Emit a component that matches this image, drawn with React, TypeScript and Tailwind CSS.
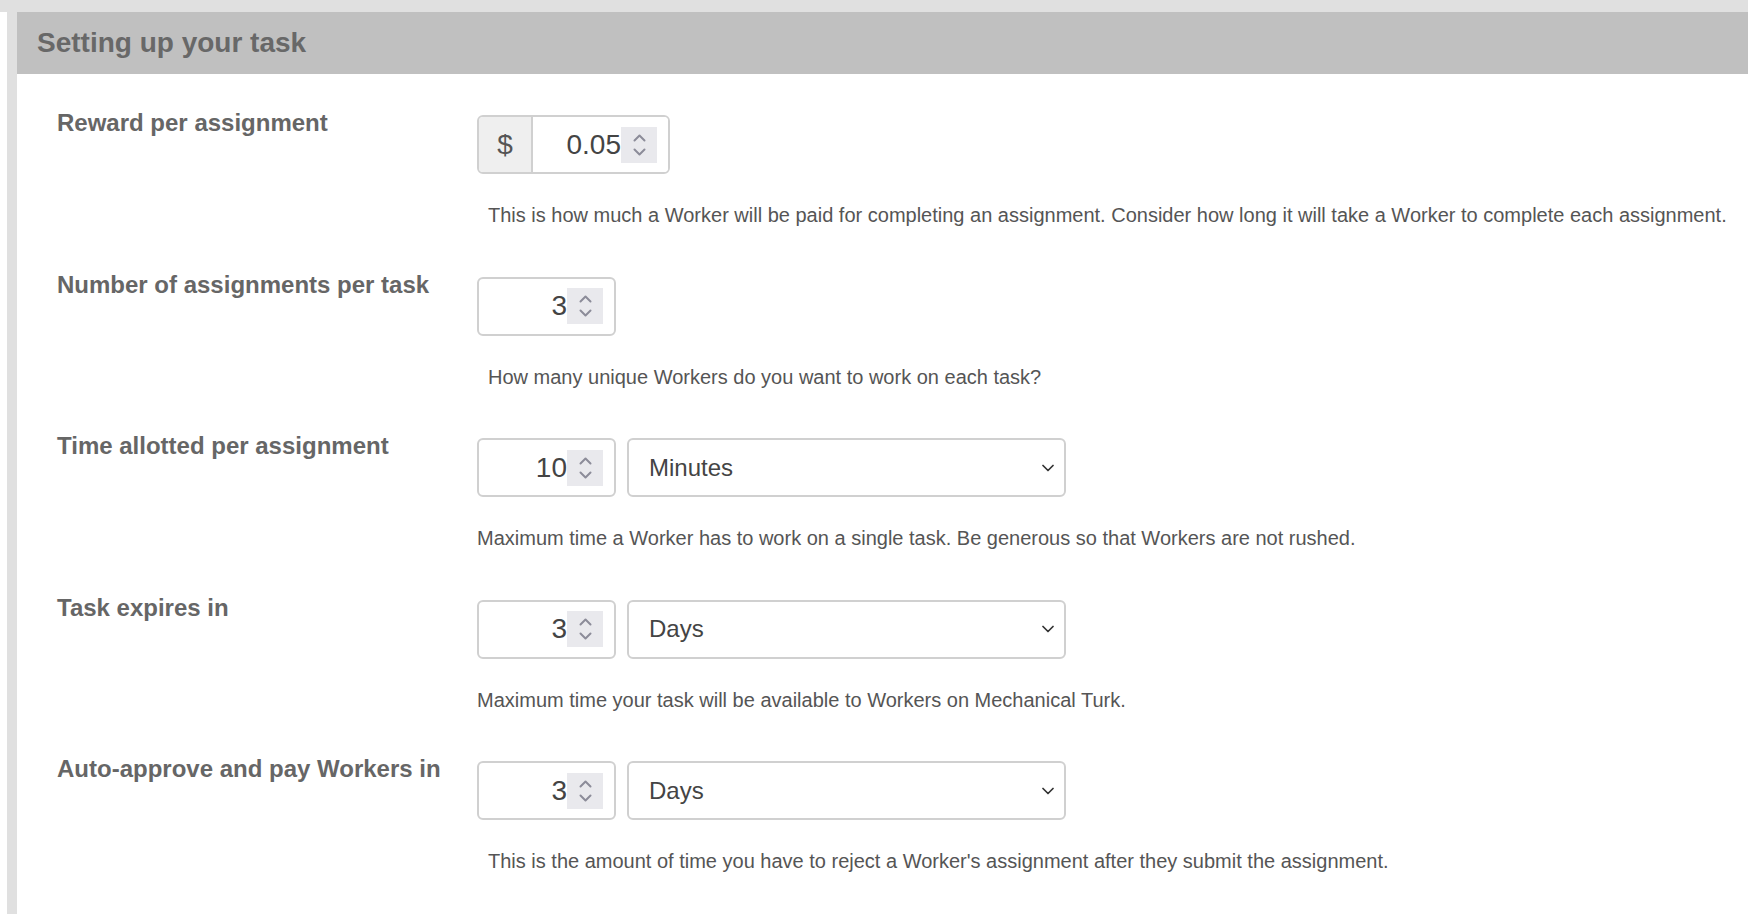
import React from 'react'

type Row = {
  label: string
  value: string
  money?: boolean
  unit?: string
  help: string
  indent: boolean
}

const rows: Row[] = [
  {
    label: 'Reward per assignment',
    value: '0.05',
    money: true,
    help: 'This is how much a Worker will be paid for completing an assignment. Consider how long it will take a Worker to complete each assignment.',
    indent: true,
  },
  {
    label: 'Number of assignments per task',
    value: '3',
    help: 'How many unique Workers do you want to work on each task?',
    indent: true,
  },
  {
    label: 'Time allotted per assignment',
    value: '10',
    unit: 'Minutes',
    help: 'Maximum time a Worker has to work on a single task. Be generous so that Workers are not rushed.',
    indent: false,
  },
  {
    label: 'Task expires in',
    value: '3',
    unit: 'Days',
    help: 'Maximum time your task will be available to Workers on Mechanical Turk.',
    indent: false,
  },
  {
    label: 'Auto-approve and pay Workers in',
    value: '3',
    unit: 'Days',
    help: "This is the amount of time you have to reject a Worker's assignment after they submit the assignment.",
    indent: true,
  },
]

function Spinner() {
  return (
    <div className="flex h-[36px] w-[36px] flex-col items-center justify-center gap-[6px] bg-[#e9e9ed]">
      <svg width="13" height="8" viewBox="0 0 13 8" fill="none">
        <polyline points="1.5,6.5 6.5,1.5 11.5,6.5" stroke="#8c8c99" strokeWidth="2" strokeLinecap="round" strokeLinejoin="round" />
      </svg>
      <svg width="13" height="8" viewBox="0 0 13 8" fill="none">
        <polyline points="1.5,1.5 6.5,6.5 11.5,1.5" stroke="#8c8c99" strokeWidth="2" strokeLinecap="round" strokeLinejoin="round" />
      </svg>
    </div>
  )
}

function NumberBox({ value, money }: { value: string; money?: boolean }) {
  if (money) {
    return (
      <div className="flex h-[59px] w-[193px] overflow-hidden rounded-[6px] border-2 border-[#d0d0d0]">
        <div className="flex w-[54px] items-center justify-center border-r-2 border-[#d0d0d0] bg-[#efefef] text-[28px] text-[#555]">
          $
        </div>
        <div className="flex flex-1 items-center justify-end bg-white pr-[11px] text-[28px] text-[#444]">
          <span>{value}</span>
          <Spinner />
        </div>
      </div>
    )
  }
  return (
    <div className="flex h-[59px] w-[139px] items-center justify-end rounded-[6px] border-2 border-[#d0d0d0] bg-white pr-[11px] text-[28px] text-[#444]">
      <span>{value}</span>
      <Spinner />
    </div>
  )
}

function UnitSelect({ unit }: { unit: string }) {
  return (
    <div className="flex h-[59px] w-[439px] items-center justify-between rounded-[6px] border-2 border-[#d0d0d0] bg-white pl-[20px] pr-[10px] text-[24px] text-[#444]">
      <span>{unit}</span>
      <svg width="12" height="8" viewBox="0 0 12 8" fill="none">
        <polyline points="1,1.5 6,6.5 11,1.5" stroke="#333" strokeWidth="1.7" strokeLinecap="round" strokeLinejoin="round" />
      </svg>
    </div>
  )
}

export default function App() {
  return (
    <div className="min-h-screen bg-white font-['Liberation_Sans',Arial,sans-serif]">
      <div className="h-[12px] bg-[#e0e0e0]" />
      <div className="pl-[7px]">
        <div className="min-h-[902px] border-l-[10px] border-[#e0e0e0]">
          <div className="flex h-[62px] items-center bg-[#c0c0c0] pl-[20px] text-[28px] font-bold text-[#686868]">
            Setting up your task
          </div>
          <div className="pt-[41px]">
            {rows.map((row) => (
              <div key={row.label} className="flex h-[161.5px] items-start">
                <div className="-mt-[10px] w-[460px] shrink-0 pl-[40px] text-[24px] font-bold text-[#666]">
                  {row.label}
                </div>
                <div className="flex flex-col">
                  <div className="flex gap-[11px]">
                    <NumberBox value={row.value} money={row.money} />
                    {row.unit && <UnitSelect unit={row.unit} />}
                  </div>
                  <p
                    className={`mt-[30px] whitespace-nowrap text-[20px] leading-[23px] text-[#555] ${
                      row.indent ? 'pl-[11px]' : ''
                    }`}
                  >
                    {row.help}
                  </p>
                </div>
              </div>
            ))}
          </div>
        </div>
      </div>
    </div>
  )
}
